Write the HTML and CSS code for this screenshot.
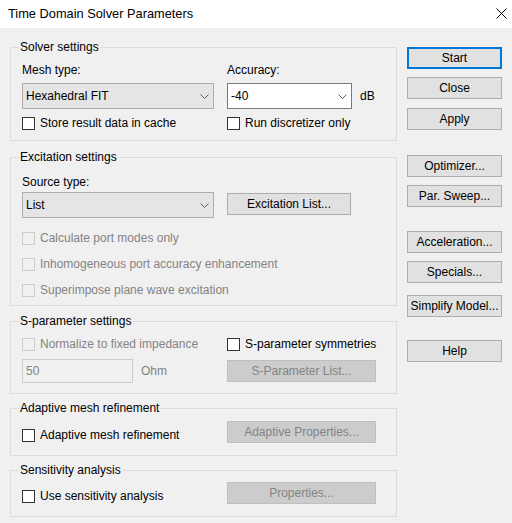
FILE: index.html
```html
<!DOCTYPE html>
<html>
<head>
  <meta charset="utf-8">
  <title>Time Domain Solver Parameters</title>
  <link rel="stylesheet" href="styles.css">
</head>
<body>
<div class="titlebar">
  <span class="title">Time Domain Solver Parameters</span>
  <svg class="close-x" width="11" height="11" viewBox="0 0 11 11">
    <path d="M0.5 0.5 L10.5 10.5 M10.5 0.5 L0.5 10.5" stroke="#000" stroke-width="1" fill="none"/>
  </svg>
</div>

<div class="dialog">
  <div class="groups">

    <div class="group solver">
      <div class="group-title">Solver settings</div>
      <div class="cols labels">
        <div class="col1">Mesh type:</div>
        <div>Accuracy:</div>
      </div>
      <div class="cols combos">
        <div class="combo col1">
          <span>Hexahedral FIT</span>
          <svg class="chev" width="9" height="5" viewBox="0 0 9 5"><path d="M0.5 0.5 L4.5 4.5 L8.5 0.5" stroke="#606060" fill="none"/></svg>
        </div>
        <div class="combo edit">
          <span>-40</span>
          <svg class="chev" width="9" height="5" viewBox="0 0 9 5"><path d="M0.5 0.5 L4.5 4.5 L8.5 0.5" stroke="#606060" fill="none"/></svg>
        </div>
        <span class="unit">dB</span>
      </div>
      <div class="cols checks">
        <label class="check col1"><span class="box"></span>Store result data in cache</label>
        <label class="check"><span class="box"></span>Run discretizer only</label>
      </div>
    </div>

    <div class="group excitation">
      <div class="group-title">Excitation settings</div>
      <div class="label-src">Source type:</div>
      <div class="cols src-row">
        <div class="combo col1">
          <span>List</span>
          <svg class="chev" width="9" height="5" viewBox="0 0 9 5"><path d="M0.5 0.5 L4.5 4.5 L8.5 0.5" stroke="#606060" fill="none"/></svg>
        </div>
        <button class="btn inner">Excitation List...</button>
      </div>
      <label class="check off first"><span class="box"></span>Calculate port modes only</label>
      <label class="check off"><span class="box"></span>Inhomogeneous port accuracy enhancement</label>
      <label class="check off"><span class="box"></span>Superimpose plane wave excitation</label>
    </div>

    <div class="group sparam">
      <div class="group-title">S-parameter settings</div>
      <div class="cols checks">
        <label class="check off col1"><span class="box"></span>Normalize to fixed impedance</label>
        <label class="check"><span class="box"></span>S-parameter symmetries</label>
      </div>
      <div class="cols imp-row">
        <div class="col1 imp">
          <div class="textbox">50</div>
          <span class="unit off">Ohm</span>
        </div>
        <button class="btn inner wide" disabled>S-Parameter List...</button>
      </div>
    </div>

    <div class="group adaptive">
      <div class="group-title">Adaptive mesh refinement</div>
      <div class="cols opt-row">
        <label class="check col1"><span class="box"></span>Adaptive mesh refinement</label>
        <button class="btn inner wide" disabled>Adaptive Properties...</button>
      </div>
    </div>

    <div class="group sensitivity">
      <div class="group-title">Sensitivity analysis</div>
      <div class="cols opt-row">
        <label class="check col1"><span class="box"></span>Use sensitivity analysis</label>
        <button class="btn inner wide" disabled>Properties...</button>
      </div>
    </div>

  </div>

  <div class="actions">
    <button class="btn side default">Start</button>
    <button class="btn side">Close</button>
    <button class="btn side apply">Apply</button>
    <button class="btn side optimizer">Optimizer...</button>
    <button class="btn side">Par. Sweep...</button>
    <button class="btn side accel">Acceleration...</button>
    <button class="btn side">Specials...</button>
    <button class="btn side simplify">Simplify Model...</button>
    <button class="btn side help">Help</button>
  </div>
</div>
</body>
</html>
```

FILE: styles.css
```css
html, body {
  margin: 0;
  width: 512px;
  height: 523px;
  overflow: hidden;
  background: #f0f0f0;
  color: #000;
  font-family: "Liberation Sans", Arial, sans-serif;
  font-size: 12px;
}

.titlebar {
  height: 28px;
  background: #fff;
  display: flex;
  align-items: center;
  justify-content: space-between;
  padding: 0 5px 0 8px;
}
.title {
  font-size: 12.8px;
  margin-top: -1px;
}
.close-x {
  margin-top: -1px;
}

.dialog {
  display: flex;
  align-items: flex-start;
}

/* left column of group boxes */
.groups {
  margin-left: 10px;
  width: 387px;
}
.group {
  border: 1px solid #dcdcdc;
  padding: 0 11px;
  line-height: 16px;
}
.group-title {
  margin: -9px 0 0 -3px;
  padding: 0 1px;
  width: fit-content;
  background: #f0f0f0;
}
.cols {
  display: flex;
}
.col1 {
  width: 192px;
  margin-right: 13px;
  flex: none;
}

.solver { margin-top: 19px; padding-bottom: 9px; }
.solver .labels { margin-top: 7px; }
.solver .combos { margin-top: 5px; align-items: center; }
.solver .checks { margin-top: 6px; }

.excitation { margin-top: 16px; padding-bottom: 7px; }
.label-src { margin-top: 9px; }
.src-row { margin-top: 2px; align-items: flex-start; }
.src-row .btn { margin-top: 1px; }
.excitation .check { margin-top: 10px; }
.excitation .check.first { margin-top: 12px; }

.sparam { margin-top: 15px; padding-bottom: 10px; }
.sparam .checks { margin-top: 7px; }
.imp-row { margin-top: 7px; align-items: center; }
.imp {
  display: flex;
  align-items: center;
}

.adaptive { margin-top: 14px; padding-bottom: 12px; }
.sensitivity { margin-top: 14px; padding-bottom: 12px; }
.adaptive .opt-row { margin-top: 5px; }
.sensitivity .opt-row { margin-top: 4px; }
.opt-row { align-items: flex-end; }

/* drop-down boxes */
.combo {
  box-sizing: border-box;
  height: 26px;
  border: 1px solid #adadad;
  background: #e5e5e5;
  display: flex;
  align-items: center;
  justify-content: space-between;
  padding: 0 4px 0 3px;
}
.combo.edit {
  width: 125px;
  background: #fff;
  border-color: #7a7a7a;
}
.chev {
  margin-top: 1px;
}
.unit {
  margin-left: 8px;
}
.unit.off {
  color: #838383;
}

.textbox {
  box-sizing: border-box;
  width: 111px;
  height: 24px;
  border: 1px solid #cccccc;
  background: #f0f0f0;
  color: #838383;
  padding-left: 3px;
  line-height: 22px;
}

/* check boxes */
.check {
  display: flex;
  align-items: center;
  height: 16px;
  white-space: nowrap;
}
.box {
  box-sizing: border-box;
  width: 13px;
  height: 13px;
  border: 1px solid #333;
  background: #fff;
  margin-right: 5px;
  flex: none;
}
.check.off {
  color: #838383;
}
.check.off .box {
  border-color: #cccccc;
  background: #f0f0f0;
}

/* push buttons */
.btn {
  box-sizing: border-box;
  height: 22px;
  border: 1px solid #adadad;
  background: #e1e1e1;
  color: #000;
  font-family: inherit;
  font-size: 12px;
  padding: 0;
  white-space: nowrap;
}
.btn.inner {
  width: 124px;
}
.btn.inner.wide {
  width: 149px;
}
.btn:disabled {
  background: #cccccc;
  border-color: #bfbfbf;
  color: #838383;
}

.actions {
  margin: 19px 0 0 10px;
  width: 95px;
  display: flex;
  flex-direction: column;
  gap: 8px;
}
.btn.side {
  width: 95px;
}
.btn.default {
  border: 2px solid #0078d7;
}
.actions .apply { margin-top: 1px; }
.actions .optimizer { margin-top: 17px; }
.actions .accel { margin-top: 16px; }
.actions .simplify { margin-top: 4px; }
.actions .help { margin-top: 15px; }
```
